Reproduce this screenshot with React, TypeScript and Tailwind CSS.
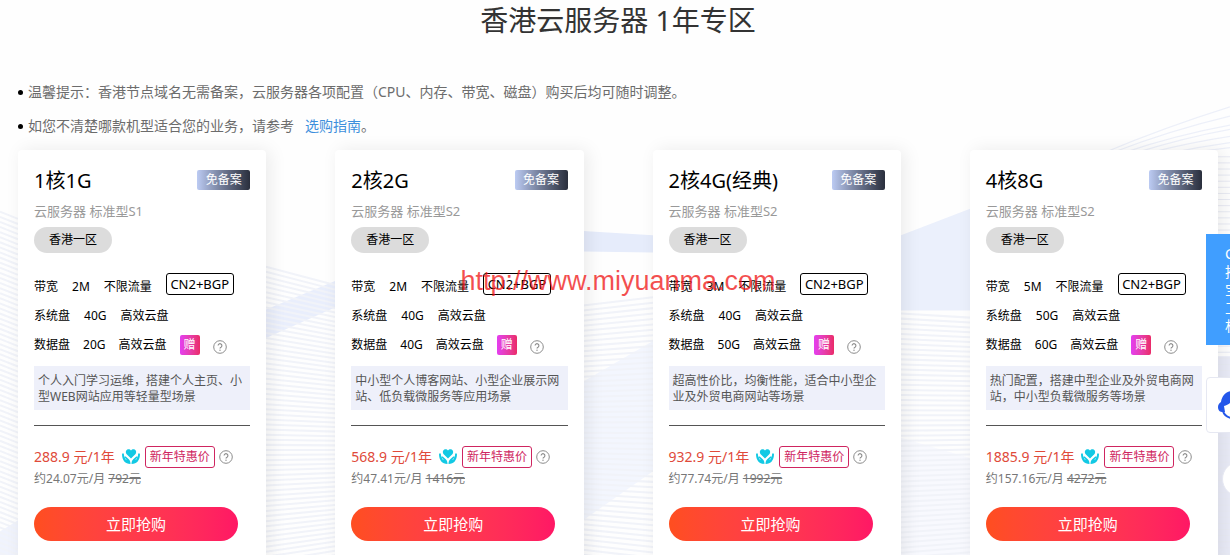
import React from 'react';
import { clsx } from 'clsx';

interface Plan {
  name: string;
  type: string;
  bandwidth: string;
  systemDisk: string;
  dataDisk: string;
  description: string;
  price: string;
  monthly: string;
  original: string;
}

const PLANS: Plan[] = [
  {
    name: '1核1G',
    type: '云服务器 标准型S1',
    bandwidth: '2M',
    systemDisk: '40G',
    dataDisk: '20G',
    description: '个人入门学习运维，搭建个人主页、小型WEB网站应用等轻量型场景',
    price: '288.9',
    monthly: '24.07',
    original: '792',
  },
  {
    name: '2核2G',
    type: '云服务器 标准型S2',
    bandwidth: '2M',
    systemDisk: '40G',
    dataDisk: '40G',
    description: '中小型个人博客网站、小型企业展示网站、低负载微服务等应用场景',
    price: '568.9',
    monthly: '47.41',
    original: '1416',
  },
  {
    name: '2核4G(经典)',
    type: '云服务器 标准型S2',
    bandwidth: '3M',
    systemDisk: '40G',
    dataDisk: '50G',
    description: '超高性价比，均衡性能，适合中小型企业及外贸电商网站等场景',
    price: '932.9',
    monthly: '77.74',
    original: '1992',
  },
  {
    name: '4核8G',
    type: '云服务器 标准型S2',
    bandwidth: '5M',
    systemDisk: '50G',
    dataDisk: '60G',
    description: '热门配置，搭建中型企业及外贸电商网站，中小型负载微服务等场景',
    price: '1885.9',
    monthly: '157.16',
    original: '4272',
  },
];

function HelpIcon({ className }: { className?: string }) {
  return (
    <svg viewBox="0 0 14 14" className={clsx('w-3.5 h-3.5 shrink-0', className)} fill="none" stroke="#8c8c8c">
      <circle cx="7" cy="7" r="6.3" strokeWidth="1" />
      <path d="M5.1 5.6a1.9 1.9 0 1 1 2.9 1.6c-.7.4-1 .7-1 1.4" strokeWidth="1.1" />
      <circle cx="7" cy="10.3" r=".7" fill="#8c8c8c" stroke="none" />
    </svg>
  );
}

// Heart held by two hands
function CareIcon() {
  return (
    <svg viewBox="0 0 18 16" className="w-[18px] h-4 shrink-0" fill="#12c9e4">
      <path d="M9 9.400 4.700 5.200C3.400 3.900 3.600 1.600 5 .7 6.400-.2 8.100.2 9 1.500c.9-1.300 2.600-1.700 4-.8 1.400.9 1.600 3.200.3 4.500z" />
      <path d="M.9 4.300C.3 4.400 0 4.900 0 5.600c.2 3.200.9 5.100 2.300 6.900 1.400 1.500 3.400 2.300 6.200 2.500 0-2.500-.6-4-2-5.100L3.700 7.600c-.8-.5-1.500.2-1 .9l1.900 2.200-.3.300C2.800 9.600 2.100 7.800 1.900 5.200c-.1-.6-.5-1-1-.9z" />
      <path d="M17.100 4.300c.6.1.9.6.9 1.300-.2 3.200-.9 5.100-2.300 6.900-1.400 1.500-3.400 2.300-6.200 2.500 0-2.500.6-4 2-5.100l2.800-2.300c.8-.5 1.500.2 1 .9l-1.900 2.200.3.300c1.500-1.400 2.200-3.200 2.400-5.800.1-.6.5-1 1-.9z" />
    </svg>
  );
}

function HeadsetIcon() {
  return (
    <svg viewBox="0 0 30 30" className="w-[30px] h-[30px] shrink-0" fill="#2457ea">
      <path d="M3 12C4 5 9 1 15 1s11 4 12 11c2 1 3 3 3 5s-1 4-3 5h-3v-8C20 14 17 12 15 9c-2 4-5 6-9 7l1 6H4c-3 0-4-3-4-5s1-4 3-5z" />
      <path d="M5 21c1 4 4 6 8 7" fill="none" stroke="#2457ea" strokeWidth="2" />
    </svg>
  );
}

// Pale ribbons and hairlines behind the cards
function Backdrop() {
  const hairlines = Array.from({ length: 70 }, (_, i) => i);
  return (
    <svg
      viewBox="0 0 1230 555"
      preserveAspectRatio="none"
      className="absolute inset-0 w-full h-full"
      fill="none"
      aria-hidden="true"
    >
      <path d="M0 522l18-11v44H0z" fill="#f0f3fd" />
      <path d="M266 304l69-28v26l-69 30z" fill="#e9eefc" />
      <path d="M583 227l70 4v17l-70-1z" fill="#e6ecfb" />
      <path d="M583 375l70-40v128l-70 48z" fill="#f3f6fe" />
      <path d="M901 231l69-26v100h-69z" fill="#ebf0fc" />
      <path d="M901 430l69 20v105h-69z" fill="#f8f9fe" />
      <path d="M1218 350h12v205h-12z" fill="#e9ebf7" />
      <g stroke="#f1f3f9" strokeWidth="2">
        {hairlines.map(i => (
          <path key={i} d={`M0 ${208 + i * 5}l18 7M266 ${262 + i * 5}l69 ${18 - i / 2}M583 ${300 + i * 5}l70 ${i / 3 - 8}M901 ${308 + i * 5}l69 ${4 - i / 5}`} />
        ))}
      </g>
      <g stroke="#e9ebf4">
        {hairlines.map(i => (
          <path key={i} d={`M1218 ${154 + i * 6}h12`} />
        ))}
      </g>
      <g stroke="#edf0f9" strokeWidth="1.2">
        <path d="M1104 150Q1165 125 1230 105" />
        <path d="M1112 150Q1170 128 1230 114" />
        <path d="M1124 150Q1175 133 1230 123" />
        <path d="M1136 150Q1185 135 1230 127" />
        <path d="M1150 150Q1190 140 1230 134" />
        <path d="M1172 150Q1200 144 1230 140" />
        <path d="M1190 150l40-5" />
      </g>
    </svg>
  );
}

function PlanCard({ plan }: { plan: Plan }) {
  return (
    <article className="bg-white rounded px-4 pt-4 pb-6 shadow-[4px_0_18px_rgba(0,0,0,0.08)]">
      <div className="flex items-start justify-between">
        <h2 className="text-xl leading-[30px] text-black">{plan.name}</h2>
        <span className="mt-1 w-[53px] h-5 rounded-xs bg-linear-to-r from-[#bccbf3] to-[#2a2f3d] text-white text-xs leading-5 text-center">
          免备案
        </span>
      </div>
      <p className="mt-[5px] text-[13px] leading-5 text-[#999]">{plan.type}</p>
      <button type="button" className="mt-1.5 block h-[26px] px-[15px] rounded-full bg-[#dcdcdc] text-xs text-black">
        香港一区
      </button>

      <div className="mt-[19px] text-xs text-black">
        <div className="flex items-center gap-[14px] h-[29px]">
          <span>带宽</span>
          <span>{plan.bandwidth}</span>
          <span>不限流量</span>
          <span className="self-start mt-px w-[68px] h-[22px] rounded-[3px] border border-black text-[13px] leading-5 text-center">
            CN2+BGP
          </span>
        </div>
        <div className="flex items-center gap-[14px] h-[29px]">
          <span>系统盘</span>
          <span>{plan.systemDisk}</span>
          <span>高效云盘</span>
        </div>
        <div className="flex items-center gap-[13px] h-[29px]">
          <span>数据盘</span>
          <span>{plan.dataDisk}</span>
          <span>高效云盘</span>
          <span className="w-5 h-5 rounded-xs bg-linear-to-r from-[#e43df0] to-[#ea2a68] text-white leading-5 text-center">
            赠
          </span>
          <HelpIcon className="mt-1" />
        </div>
      </div>

      <p className="mt-[7px] px-1 pt-[7px] pb-[5px] bg-[#eef0fa] text-xs leading-4 text-[#555]">{plan.description}</p>
      <hr className="mt-[15px] border-[#555]" />

      <div className="mt-5 flex items-center h-[22px] whitespace-nowrap">
        <span className="mr-[7px] text-sm text-[#e04a3a]">{plan.price} 元/1年</span>
        <CareIcon />
        <span className="ml-[5px] mr-1 w-[70px] h-[22px] shrink-0 rounded-[3px] border border-[#cf2560] text-[#cf2560] text-xs leading-5 text-center">
          新年特惠价
        </span>
        <HelpIcon />
      </div>
      <p className="text-xs leading-[22px] text-[#777]">
        约{plan.monthly}元/月 <del>{plan.original}元</del>
      </p>
      <button
        type="button"
        className="mt-[17px] block w-[204px] h-[34px] rounded-full bg-linear-to-r from-[#ff4e1f] to-[#ff1765] text-white text-[15px]"
      >
        立即抢购
      </button>
    </article>
  );
}

// Contact widgets docked at the right edge, mostly slid out of view
function SideDock() {
  return (
    <aside className="absolute right-0 top-[234px] w-6 h-72 overflow-hidden">
      <button type="button" className="block w-[52px] h-[111px] pl-[19px] bg-[#409eff] text-white text-sm leading-[18px]">
        <span className="block w-3.5 text-left break-all">C推宝工机</span>
      </button>
      <div className="mt-8 w-16 h-14 pl-[11px] rounded bg-white border border-[#e6e8f2] flex items-center">
        <HeadsetIcon />
      </div>
      <div className="mt-7 ml-4 w-9 h-9 rounded-full bg-white border border-[#e6e8f2]" />
    </aside>
  );
}

export default function App() {
  return (
    <div className="relative min-h-screen overflow-hidden bg-[#fefefe] font-['Noto_Sans','Noto_Sans_CJK_SC',sans-serif]">
      <Backdrop />
      <main className="relative pl-[18px] pr-3">
        <h1 className="text-[28px] leading-10 text-center text-[#333]">香港云服务器 1年专区</h1>
        <ul className="mt-[35px] mb-[7px] text-sm leading-[34px] text-[#6c6c6c]">
          <li className="flex items-center gap-[5px]">
            <span className="w-[5px] h-[5px] rounded-full bg-black" />
            温馨提示：香港节点域名无需备案，云服务器各项配置（CPU、内存、带宽、磁盘）购买后均可随时调整。
          </li>
          <li className="flex items-center gap-[5px]">
            <span className="w-[5px] h-[5px] rounded-full bg-black" />
            <span>
              如您不清楚哪款机型适合您的业务，请参考
              <a href="#guide" className="ml-[11px] text-[#3d8fdc]">选购指南</a>。
            </span>
          </li>
        </ul>
        <div className="grid grid-cols-4 gap-[69px]">
          {PLANS.map(plan => (
            <PlanCard key={plan.name} plan={plan} />
          ))}
        </div>
        <div className="absolute inset-x-0 top-[265px] pl-[18px] pr-3 text-center text-[27px] leading-8 text-[#f01414]/75 font-['Liberation_Sans',sans-serif] pointer-events-none">
          http://www.miyuanma.com
        </div>
      </main>
      <SideDock />
    </div>
  );
}
